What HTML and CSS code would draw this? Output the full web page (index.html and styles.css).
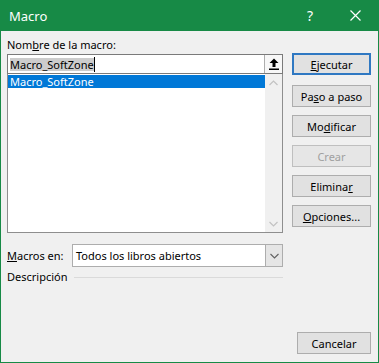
FILE: index.html
```html
<!DOCTYPE html>
<html lang="es">
<head>
    <meta charset="UTF-8">
    <meta name="viewport" content="width=device-width, initial-scale=1.0">
    <title>Macro</title>
    <link rel="stylesheet" href="styles.css">
</head>
<body>
    <div class="window">
        <div class="titlebar">
            <span class="title">Macro</span>
            <span class="help">?</span>
            <svg class="close" width="11" height="11" viewBox="0 0 11 11">
                <path d="M0.5 0.5 L10.5 10.5 M10.5 0.5 L0.5 10.5" stroke="#fff" stroke-width="1.2" fill="none"/>
            </svg>
        </div>
        <div class="content">
            <div class="left">
                <div class="label">Nom<u>b</u>re de la macro:</div>
                <div class="namefield">
                    <span class="name-text"><span class="selected-text">Macro_SoftZone</span><span class="caret"></span></span>
                    <div class="upbtn">
                        <svg width="10" height="12" viewBox="0 0 10 12">
                            <path d="M5 0.5 L9.5 5 L6.5 5 L6.5 9 L3.5 9 L3.5 5 L0.5 5 Z" fill="#000"/>
                            <rect x="0" y="10.5" width="10" height="1.5" fill="#000"/>
                        </svg>
                    </div>
                </div>
                <div class="macrolist">
                    <div class="items">
                        <div class="item active">Macro_SoftZone</div>
                    </div>
                    <div class="scrollbar">
                        <svg width="9" height="6" viewBox="0 0 9 6"><path d="M0.5 5 L4.5 1 L8.5 5" stroke="#c2c2c2" stroke-width="1.2" fill="none"/></svg>
                        <svg width="9" height="6" viewBox="0 0 9 6"><path d="M0.5 1 L4.5 5 L8.5 1" stroke="#c2c2c2" stroke-width="1.2" fill="none"/></svg>
                    </div>
                </div>
                <div class="macros-en">
                    <span class="label"><u>M</u>acros en:</span>
                    <div class="select">
                        <span class="select-text">Todos los libros abiertos</span>
                        <div class="dropbtn">
                            <svg width="9" height="6" viewBox="0 0 9 6"><path d="M0.5 1 L4.5 5 L8.5 1" stroke="#606060" stroke-width="1.1" fill="none"/></svg>
                        </div>
                    </div>
                </div>
                <div class="desc">
                    <span class="label">Descripción</span>
                    <div class="line"></div>
                </div>
            </div>
            <div class="right">
                <button class="btn default"><u>E</u>jecutar</button>
                <button class="btn">Pa<u>s</u>o a paso</button>
                <button class="btn">Mo<u>d</u>ificar</button>
                <button class="btn" disabled>Crear</button>
                <button class="btn">Elimina<u>r</u></button>
                <button class="btn"><u>O</u>pciones...</button>
            </div>
        </div>
        <div class="footer">
            <button class="btn cancel">Cancelar</button>
        </div>
    </div>
</body>
</html>
```

FILE: styles.css
```css
body {
    margin: 0;
    font-family: "Noto Sans", "Open Sans", sans-serif;
    font-size: 11px;
    color: #000;
    background: #f0f0f0;
}
.window {
    width: 379px;
    height: 363px;
    box-sizing: border-box;
    border: 1px solid #178a46;
    border-top: none;
    background: #f0f0f0;
    display: flex;
    flex-direction: column;
}
.titlebar {
    height: 31px;
    background: #178a46;
    color: #fff;
    display: flex;
    align-items: center;
    margin: 0 -1px;
}
.title {
    font-size: 13px;
    padding-left: 9px;
    flex: 1;
}
.help {
    font-size: 14px;
    margin-right: 37px;
}
.close {
    margin-right: 18px;
}
.content {
    display: flex;
    padding: 0 7px 0 6px;
}
.left {
    width: 276px;
    padding-top: 6px;
}
.label {
    line-height: 16px;
    white-space: nowrap;
}
.left > .label {
    margin-bottom: 1px;
}
.namefield {
    height: 20px;
    box-sizing: border-box;
    border: 1px solid #7a7a7a;
    background: #fff;
    display: flex;
    align-items: center;
}
.name-text {
    flex: 1;
    padding-left: 2px;
    display: flex;
    align-items: center;
}
.selected-text {
    background: #cccccc;
    line-height: 13px;
}
.caret {
    width: 1px;
    height: 15px;
    background: #000;
}
.upbtn {
    width: 18px;
    height: 18px;
    box-sizing: border-box;
    border-left: 1px solid #adadad;
    background: #f7f7f7;
    display: flex;
    align-items: center;
    justify-content: center;
}
.macrolist {
    height: 159px;
    box-sizing: border-box;
    border: 1px solid #8e8e8e;
    border-top: none;
    background: #fff;
    display: flex;
}
.items {
    flex: 1;
    padding-top: 1px;
}
.item {
    height: 13px;
    line-height: 13px;
    padding-left: 2px;
}
.item.active {
    background: #0078d7;
    color: #fff;
}
.scrollbar {
    width: 17px;
    background: #f0f0f0;
    display: flex;
    flex-direction: column;
    justify-content: space-between;
    align-items: center;
    padding: 6px 0 5px;
    box-sizing: border-box;
}
.macros-en {
    margin-top: 11px;
    display: flex;
    align-items: center;
}
.macros-en .label {
    width: 65px;
}
.select {
    flex: 1;
    height: 23px;
    box-sizing: border-box;
    border: 1px solid #adadad;
    background: #fff;
    display: flex;
    align-items: center;
}
.select-text {
    flex: 1;
    padding-left: 3px;
}
.dropbtn {
    width: 17px;
    height: 21px;
    box-sizing: border-box;
    border-left: 1px solid #adadad;
    background: #e5e5e5;
    display: flex;
    align-items: center;
    justify-content: center;
}
.desc {
    margin-top: 2px;
    display: flex;
    align-items: center;
}
.desc .line {
    flex: 1;
    height: 1px;
    background: #dadada;
    margin-left: 6px;
}
.right {
    width: 79px;
    margin-left: 9px;
    padding-top: 22px;
    display: flex;
    flex-direction: column;
    gap: 8px;
}
.btn {
    height: 22px;
    box-sizing: border-box;
    border: 1px solid #adadad;
    background: #e1e1e1;
    font-family: "Noto Sans", "Open Sans", sans-serif;
    font-size: 11px;
    color: #000;
    padding: 0;
}
.btn.default {
    border: 2px solid #2f78c2;
    margin-bottom: 2px;
}
.btn:disabled {
    border-color: #bfbfbf;
    background: #e6e6e6;
    color: #a0a0a0;
}
.footer {
    margin-top: auto;
    display: flex;
    justify-content: flex-end;
    padding: 0 7px 8px 0;
}
.btn.cancel {
    width: 74px;
}
```
